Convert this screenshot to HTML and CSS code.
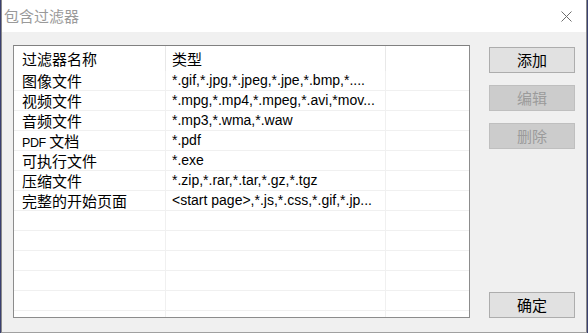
FILE: index.html
```html
<!DOCTYPE html>
<html lang="zh-CN">
<head>
<meta charset="utf-8">
<title>包含过滤器</title>
<link rel="stylesheet" href="styles.css">
</head>
<body>
<div class="desktop">
  <div class="window">
    <div class="titlebar">
      <span class="title">包含过滤器</span>
      <span class="close">
        <svg width="11" height="11" viewBox="0 0 11 11"><path d="M0.5 0.5 L10.5 10.5 M10.5 0.5 L0.5 10.5" stroke="#6d6d6d" stroke-width="1" fill="none"/></svg>
      </span>
    </div>
    <div class="content">
      <div class="list">
        <div class="row head">
          <div class="cell c1">过滤器名称</div>
          <div class="cell c2 cjk">类型</div>
          <div class="cell c3"></div>
        </div>
        <div class="row"><div class="cell c1">图像文件</div><div class="cell c2">*.gif,*.jpg,*.jpeg,*.jpe,*.bmp,*....</div><div class="cell c3"></div></div>
        <div class="row"><div class="cell c1">视频文件</div><div class="cell c2">*.mpg,*.mp4,*.mpeg,*.avi,*mov...</div><div class="cell c3"></div></div>
        <div class="row"><div class="cell c1">音频文件</div><div class="cell c2">*.mp3,*.wma,*.waw</div><div class="cell c3"></div></div>
        <div class="row"><div class="cell c1"><span class="lat">PDF</span> 文档</div><div class="cell c2">*.pdf</div><div class="cell c3"></div></div>
        <div class="row"><div class="cell c1">可执行文件</div><div class="cell c2">*.exe</div><div class="cell c3"></div></div>
        <div class="row"><div class="cell c1">压缩文件</div><div class="cell c2">*.zip,*.rar,*.tar,*.gz,*.tgz</div><div class="cell c3"></div></div>
        <div class="row"><div class="cell c1">完整的开始页面</div><div class="cell c2">&lt;start page&gt;,*.js,*.css,*.gif,*.jp...</div><div class="cell c3"></div></div>
        <div class="row"><div class="cell c1"></div><div class="cell c2"></div><div class="cell c3"></div></div>
        <div class="row"><div class="cell c1"></div><div class="cell c2"></div><div class="cell c3"></div></div>
        <div class="row"><div class="cell c1"></div><div class="cell c2"></div><div class="cell c3"></div></div>
        <div class="row"><div class="cell c1"></div><div class="cell c2"></div><div class="cell c3"></div></div>
        <div class="row"><div class="cell c1"></div><div class="cell c2"></div><div class="cell c3"></div></div>
        <div class="row"><div class="cell c1"></div><div class="cell c2"></div><div class="cell c3"></div></div>
      </div>
      <div class="buttons">
        <button class="btn">添加</button>
        <button class="btn disabled">编辑</button>
        <button class="btn disabled">删除</button>
        <button class="btn ok">确定</button>
      </div>
    </div>
  </div>
</div>
</body>
</html>
```

FILE: styles.css
```css
* { box-sizing: border-box; }
html, body { margin: 0; padding: 0; }
body {
  width: 588px;
  height: 333px;
  overflow: hidden;
  background: #3a4070;
  font-family: "Noto Sans CJK SC", sans-serif;
  font-size: 15px;
  color: #000;
}
.desktop {
  padding-left: 1px;
  width: 588px;
  height: 333px;
}
.window {
  width: 586px;
  height: 333px;
  border-left: 1px solid #8a8a8a;
  border-right: 1px solid #8a8a8a;
  border-bottom: 1px solid #a0a0a0;
  display: flex;
  flex-direction: column;
}
.titlebar {
  height: 32px;
  background: #fff;
  display: flex;
  align-items: center;
  justify-content: space-between;
  padding-left: 2px;
  padding-right: 14px;
  flex: none;
}
.title {
  color: #9a9a9a;
  line-height: 20px;
  margin-top: -1px;
}
.close {
  display: flex;
  width: 11px;
  height: 11px;
  margin-top: 1px;
}
.content {
  flex: 1;
  background: #f0f0f0;
  display: flex;
  padding: 13px 11px 14px 11px;
  gap: 19px;
}
.list {
  width: 457px;
  height: 273px;
  background: #fff;
  border: 1px solid #8c8c8c;
  border-top-color: #808080;
  overflow: hidden;
}
.row {
  display: flex;
  height: 20px;
  border-bottom: 1px solid #f0f0f0;
}
.row.head {
  height: 25px;
  border-bottom: none;
}
.cell {
  line-height: 19px;
  white-space: nowrap;
  overflow: hidden;
  border-right: 1px solid #f0f0f0;
}
.head .cell {
  line-height: 25px;
  border-right-color: #e8e8e8;
}
.c1 { width: 152px; padding-left: 8px; }
.c2 {
  width: 220px;
  padding-left: 6px;
  font-family: "Liberation Sans", "Noto Sans CJK SC", sans-serif;
  font-size: 14px;
}
.c2.cjk {
  font-family: "Noto Sans CJK SC", sans-serif;
  font-size: 15px;
}
.c3 { flex: 1; border-right: none; }
.head .c3 { border-right: none; }
.lat {
  font-family: "Liberation Sans", sans-serif;
  font-size: 12.5px;
  letter-spacing: -0.4px;
}
.buttons {
  width: 86px;
  display: flex;
  flex-direction: column;
  gap: 12px;
  padding-top: 2px;
}
.btn {
  width: 86px;
  height: 26px;
  background: #e1e1e1;
  border: 1px solid #adadad;
  font-family: inherit;
  font-size: 15px;
  color: #000;
  padding: 0;
  line-height: 22px;
}
.btn.disabled {
  background: #cccccc;
  border-color: #bfbfbf;
  color: #9b9b9b;
}
.btn.ok {
  margin-top: auto;
}
```
